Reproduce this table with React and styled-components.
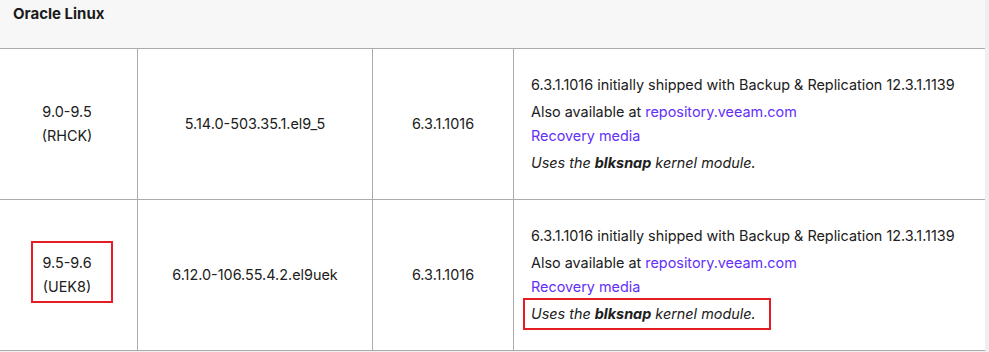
import React from "react";
import styled, { createGlobalStyle } from "styled-components";

const GlobalStyle = createGlobalStyle`
  html, body {
    margin: 0;
    padding: 0;
    background: #efefef;
    overflow: hidden;
  }
  body {
    font-family: Inter, "Noto Sans", sans-serif;
    font-size: 14.4px;
    color: #202020;
  }
`;

const Page = styled.div`
  width: 985px;
  background: #ffffff;
  overflow: hidden;
`;

const Grid = styled.div`
  display: grid;
  grid-template-columns: 141px 235px 141px 471px;
  margin-left: -3px;
  width: 988px;
`;

const Header = styled.div`
  grid-column: 1 / -1;
  height: 49px;
  box-sizing: border-box;
  padding: 4px 0 0 16px;
  background: #f7f7f7;
  border-bottom: 1px solid #ababab;
  font-size: 15px;
  font-weight: 700;
  line-height: 20px;
  color: #1c1c1c;
`;

const Cell = styled.div`
  height: 150px;
  border-bottom: 1px solid #ababab;
  border-right: ${(p) => (p.$last ? "none" : "1px solid #ababab")};
  display: flex;
  align-items: center;
  justify-content: ${(p) => (p.$left ? "flex-start" : "center")};
  padding-left: ${(p) => (p.$left ? "17px" : "0")};
  text-align: center;
  line-height: 24px;
`;

const Stack = styled.div`
  display: flex;
  flex-direction: column;
  gap: 3px;
  text-align: left;
`;

const Para = styled.div`
  line-height: 24px;
`;

const Note = styled.div`
  line-height: 24px;
  font-style: italic;
  align-self: flex-start;
  ${(p) =>
    p.$marked &&
    `
    border: 2px solid #e51c24;
    padding: 2px 13px 2px 6px;
    margin: -4px -15px -4px -8px;
  `}
`;

const Strong = styled.b`
  font-weight: 700;
`;

const Link = styled.a`
  color: #6330f7;
  text-decoration: none;
`;

const Marked = styled.span`
  display: inline-block;
  border: 2px solid #e51c24;
  padding: 8px 19px 2px 9px;
  margin: -10px -21px -4px -11px;
`;

const rows = [
  { ver: ["9.0-9.5", "(RHCK)"], kernel: "5.14.0-503.35.1.el9_5", marked: false },
  { ver: ["9.5-9.6", "(UEK8)"], kernel: "6.12.0-106.55.4.2.el9uek", marked: true },
];

function Version({ lines, marked }) {
  const content = (
    <>
      {lines[0]}
      <br />
      {lines[1]}
    </>
  );
  return <div>{marked ? <Marked>{content}</Marked> : content}</div>;
}

export default function App() {
  return (
    <>
      <GlobalStyle />
      <Page>
        <Grid>
          <Header>Oracle Linux</Header>
          {rows.map((r) => (
            <React.Fragment key={r.kernel}>
              <Cell>
                <Version lines={r.ver} marked={r.marked} />
              </Cell>
              <Cell>{r.kernel}</Cell>
              <Cell>6.3.1.1016</Cell>
              <Cell $left $last>
                <Stack>
                  <Para>6.3.1.1016 initially shipped with Backup &amp; Replication 12.3.1.1139</Para>
                  <Para>
                    Also available at <Link href="#">repository.veeam.com</Link>
                    <br />
                    <Link href="#">Recovery media</Link>
                  </Para>
                  <Note $marked={r.marked}>
                    Uses the <Strong>blksnap</Strong> kernel module.
                  </Note>
                </Stack>
              </Cell>
            </React.Fragment>
          ))}
        </Grid>
      </Page>
    </>
  );
}
